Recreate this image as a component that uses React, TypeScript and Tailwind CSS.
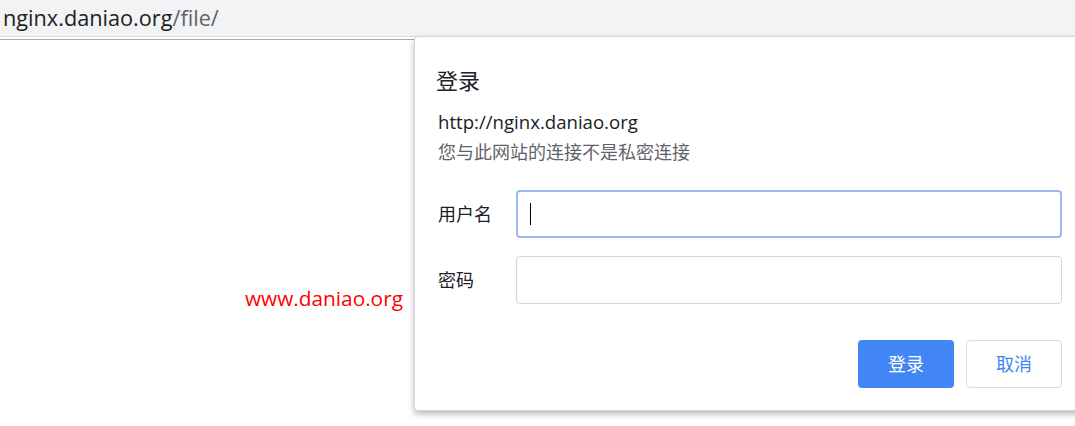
const font = { fontFamily: '"Segoe UI", "Open Sans", "Noto Sans CJK SC", sans-serif' };

export default function App() {
  return (
    <div className="relative h-[426px] w-[1075px] overflow-hidden bg-white" style={font}>
      {/* address bar */}
      <div className="flex h-[37px] items-center border-b border-[#dadce0] bg-[#f1f3f4] pl-[3px] text-[21.7px] leading-none">
        <span className="text-[#202124]">nginx.daniao.org</span>
        <span className="text-[#5f6368]">/file/</span>
      </div>
      <div className="mt-[2px] h-px w-[414px] bg-[#a8a8a8]" />

      <div className="pl-[245px] pt-[248px] text-[20.8px] leading-none text-[#ff0000]">www.daniao.org</div>

      {/* auth dialog */}
      <div className="absolute left-[414px] top-[36px] h-[375px] w-[680px] rounded-[4px] border border-[#d6d6d6] bg-white shadow-[0_3px_6px_rgba(0,0,0,0.28)]">
        <div className="pl-[23px] pt-[28px]">
          <div className="-ml-[2px] text-[22px] leading-[30px] text-[#202124]">登录</div>
          <div className="mt-[14px] text-[18.6px] leading-[26px] text-[#202124]">http://nginx.daniao.org</div>
          <div className="mt-[4px] text-[18px] leading-[26px] text-[#5f6368]">您与此网站的连接不是私密连接</div>
        </div>

        <div className="mt-[25px] flex flex-col gap-[18px] pl-[23px]">
          <div className="flex items-center">
            <span className="w-[78px] text-[18px] text-[#202124]">用户名</span>
            <div className="flex h-[48px] w-[546px] items-center rounded-[4px] border-2 border-[#9ab9ee] pl-[12px]">
              <div className="h-[22px] w-px bg-black" />
            </div>
          </div>
          <div className="flex items-center">
            <span className="w-[78px] text-[18px] text-[#202124]">密码</span>
            <div className="h-[48px] w-[546px] rounded-[4px] border border-[#d5d5d5]" />
          </div>
        </div>

        <div className="mt-[36px] flex gap-[12px] pl-[443px]">
          <button className="h-[48px] w-[96px] rounded-[4px] bg-[#4285f4] text-[18px] text-white">登录</button>
          <button className="h-[48px] w-[96px] rounded-[4px] border border-[#dadce0] bg-white text-[18px] text-[#4285f4]">取消</button>
        </div>
      </div>
    </div>
  );
}
